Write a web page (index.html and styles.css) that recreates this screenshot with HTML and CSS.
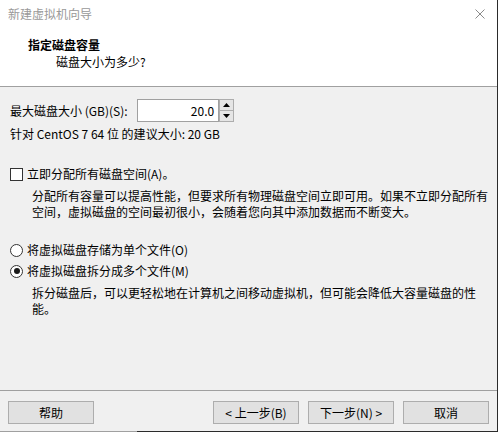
FILE: index.html
```html
<!DOCTYPE html>
<html lang="zh">
<head>
<meta charset="utf-8">
<title>新建虚拟机向导</title>
<link rel="stylesheet" href="styles.css">
</head>
<body>
<div class="window">
  <div class="header">
    <div class="titlebar">
      <span class="title">新建虚拟机向导</span>
      <svg class="close" width="10" height="10" viewBox="0 0 10 10"><path d="M0.5 0.5L9.5 9.5M9.5 0.5L0.5 9.5" stroke="#8a8a8a" stroke-width="1" fill="none"/></svg>
    </div>
    <div class="heading">指定磁盘容量</div>
    <div class="subheading">磁盘大小为多少?</div>
  </div>
  <div class="content">
    <div class="size-row">
      <span class="size-label">最大磁盘大小 (GB)(S):</span>
      <div class="spin">
        <div class="spin-input">20.0</div>
        <div class="spin-btns">
          <div class="spin-btn"><svg width="7" height="4" viewBox="0 0 7 4"><path d="M3.5 0L7 4H0z" fill="#000"/></svg></div>
          <div class="spin-btn"><svg width="7" height="4" viewBox="0 0 7 4"><path d="M0 0H7L3.5 4z" fill="#000"/></svg></div>
        </div>
      </div>
    </div>
    <div class="hint">针对 CentOS 7 64 位 的建议大小: 20 GB</div>
    <div class="option check-row"><span class="checkbox"></span><span>立即分配所有磁盘空间(A)。</span></div>
    <div class="desc">分配所有容量可以提高性能，但要求所有物理磁盘空间立即可用。如果不立即分配所有空间，虚拟磁盘的空间最初很小，会随着您向其中添加数据而不断变大。</div>
    <div class="option radio-row first"><span class="radio"></span><span>将虚拟磁盘存储为单个文件(O)</span></div>
    <div class="option radio-row second"><span class="radio checked"></span><span>将虚拟磁盘拆分成多个文件(M)</span></div>
    <div class="desc">拆分磁盘后，可以更轻松地在计算机之间移动虚拟机，但可能会降低大容量磁盘的性能。</div>
  </div>
  <div class="footer">
    <button class="btn">帮助</button>
    <div class="spacer"></div>
    <button class="btn">&lt; 上一步(B)</button>
    <button class="btn">下一步(N) &gt;</button>
    <button class="btn">取消</button>
  </div>
  <div class="edge"><span class="edge-light"></span><span class="edge-dark"></span></div>
</div>
</body>
</html>
```

FILE: styles.css
```css
html, body {
  margin: 0;
  padding: 0;
  background: #f0f0f0;
}
body {
  width: 498px;
  height: 432px;
  overflow: hidden;
  font-family: "Noto Sans CJK SC", "Noto Sans", sans-serif;
  font-size: 12px;
  line-height: 16px;
  color: #000;
}
.window {
  width: 497px;
  height: 432px;
  border-right: 1px solid #2b2b2b;
  display: flex;
  flex-direction: column;
  background: #f0f0f0;
}
.header {
  height: 86px;
  background: #fff;
  border-bottom: 1px solid #a0a0a0;
  box-sizing: content-box;
}
.titlebar {
  display: flex;
  align-items: center;
  justify-content: space-between;
  padding: 6px 12px 0 8px;
  height: 16px;
}
.title {
  color: #999;
}
.close {
  display: block;
}
.heading {
  font-weight: bold;
  padding-left: 28px;
  margin-top: 15px;
}
.subheading {
  padding-left: 56px;
  margin-top: 1px;
}
.content {
  height: 303px;
  padding: 0 0 0 10px;
  border-bottom: 1px solid #a0a0a0;
}
.size-row {
  display: flex;
  align-items: center;
  margin-top: 12px;
  height: 23px;
}
.size-label {
  width: 127px;
}
.spin {
  display: flex;
  height: 23px;
  width: 97px;
}
.spin-input {
  width: 77px;
  height: 21px;
  border: 1px solid #a0a0a0;
  background: #fff;
  text-align: right;
  padding-right: 4px;
  line-height: 21px;
  box-sizing: content-box;
}
.spin-btns {
  display: flex;
  flex-direction: column;
  width: 15px;
  height: 23px;
}
.spin-btn {
  flex: 1;
  background: #e5e5e5;
  border: 1px solid #adadad;
  display: flex;
  align-items: center;
  justify-content: center;
}
.spin-btn + .spin-btn {
  border-top: none;
}
.spin-btn svg {
  display: block;
}
.hint {
  margin-top: 4px;
}
.option {
  display: flex;
  align-items: center;
  gap: 4px;
}
.check-row {
  margin-top: 24px;
}
.checkbox {
  width: 11px;
  height: 11px;
  border: 1px solid #333;
  background: #fff;
}
.desc {
  padding-left: 22px;
  margin-top: 6px;
  width: 460px;
  line-break: strict;
}
.radio-row.first {
  margin-top: 22px;
}
.radio-row.second {
  margin-top: 5px;
}
.radio {
  width: 11px;
  height: 11px;
  border: 1px solid #333;
  border-radius: 50%;
  background: #fff;
  position: relative;
}
.radio.checked::after {
  content: "";
  position: absolute;
  left: 2.5px;
  top: 2.5px;
  width: 6px;
  height: 6px;
  border-radius: 50%;
  background: #1a1a1a;
}
.footer {
  display: flex;
  padding: 10px 8px 0 8px;
  gap: 9px;
  height: 29px;
}
.spacer {
  flex: 1;
}
.btn {
  width: 86px;
  height: 23px;
  background: #e1e1e1;
  border: 1px solid #adadad;
  font-family: inherit;
  font-size: 12px;
  color: #000;
  padding: 0;
  line-height: 21px;
}
.edge {
  display: flex;
  height: 1px;
  margin-top: auto;
}
.edge-light {
  width: 137px;
  background: #a0a0a0;
}
.edge-dark {
  flex: 1;
  background: #2b2b2b;
}
```
